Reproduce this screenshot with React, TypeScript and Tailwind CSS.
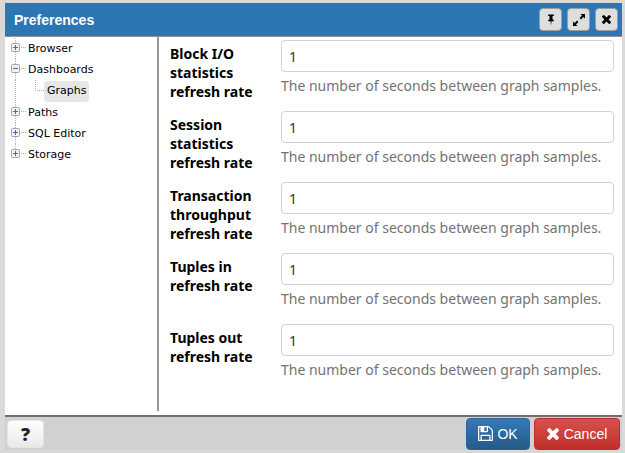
import type { ReactNode } from "react";

const FIELDS = [
  { id: "block-io", label: "Block I/O statistics refresh rate" },
  { id: "session", label: "Session statistics refresh rate" },
  { id: "transaction", label: "Transaction throughput refresh rate" },
  { id: "tuples-in", label: "Tuples in refresh rate" },
  { id: "tuples-out", label: "Tuples out refresh rate" },
];

function TimesIcon({ className }: { className: string }) {
  return (
    <svg viewBox="300 364 1192 1192" className={className} fill="currentColor" aria-hidden="true">
      <path d="M1490 1322q0 40-28 68l-136 136q-28 28-68 28t-68-28l-294-294-294 294q-28 28-68 28t-68-28l-136-136q-28-28-28-68t28-68l294-294-294-294q-28-28-28-68t28-68l136-136q28-28 68-28t68 28l294 294 294-294q28-28 68-28t68 28l136 136q28 28 28 68t-28 68l-294 294 294 294q28 28 28 68z" />
    </svg>
  );
}

function SaveIcon() {
  return (
    <svg viewBox="0 128 1536 1536" className="size-[15px]" fill="currentColor" aria-hidden="true">
      <path d="M384 1536h768v-384h-768v384zm896 0h128v-896q0-14-10-38.5t-20-34.5l-281-281q-10-10-34-20t-39-10v416q0 40-28 68t-68 28h-576q-40 0-68-28t-28-68v-416h-128v1280h128v-416q0-40 28-68t68-28h832q40 0 68 28t28 68v416zm-384-928v-320q0-13-9.5-22.5t-22.5-9.5h-192q-13 0-22.5 9.5t-9.5 22.5v320q0 13 9.5 22.5t22.5 9.5h192q13 0 22.5-9.5t9.5-22.5zm640 32v928q0 40-28 68t-68 28h-1344q-40 0-68-28t-28-68v-1344q0-40 28-68t68-28h928q40 0 88 20t76 48l280 280q28 28 48 76t20 88z" />
    </svg>
  );
}

function PinIcon() {
  return (
    <svg viewBox="0 0 12 12" className="size-3" fill="currentColor" aria-hidden="true">
      <path d="M3.200 0.500h5.600v1.500H7.500v3.300q1.500.6 1.500 2H6.500L6 11.800 5.500 7.300H3q0-1.400 1.500-2V2H3.200z" />
    </svg>
  );
}

function MaximizeIcon() {
  return (
    <svg viewBox="0 0 12 12" className="size-3" fill="currentColor" aria-hidden="true">
      <path d="M7.500 0H12v4.500L10.400 3 8 5.400 6.600 4 9 1.600zM4.500 12H0V7.500L1.600 9 4 6.600 5.400 8 3 10.400z" />
    </svg>
  );
}

function TitleButton({ label, children }: { label: string; children: ReactNode }) {
  return (
    <button
      type="button"
      aria-label={label}
      className="flex size-[23px] items-center justify-center rounded border border-[#a09c98] bg-[#dedede] text-black"
    >
      {children}
    </button>
  );
}

function Toggle({ open, last }: { open: boolean; last: boolean }) {
  return (
    <svg viewBox="0 0 16 21" className="h-[21px] w-4 shrink-0" fill="none" aria-hidden="true">
      <path d={last ? "M5.500 0v10M11 9.500h5" : "M5.500 0v21M11 9.500h5"} stroke="#b0b0b0" strokeDasharray="1 1" />
      <rect x="1.500" y="5.500" width="8" height="8" rx="1" fill="#f1f1f1" stroke="#a5a5a5" />
      <path d={open ? "M3 9.500h5" : "M3 9.500h5M5.500 7v5"} stroke="#4a66b5" />
    </svg>
  );
}

type TreeItemProps = { label: string; open?: boolean; last?: boolean; children?: ReactNode };

function TreeItem({ label, open = false, last = false, children }: TreeItemProps) {
  return (
    <li>
      <button type="button" aria-expanded={open} className="flex h-[21px] items-center">
        <Toggle open={open} last={last} />
        <span className="ml-[2px] pt-[2px]">{label}</span>
      </button>
      {children}
    </li>
  );
}

export default function App() {
  return (
    <div className="flex min-h-screen flex-col border-t-[3px] border-r-[3px] border-b-[3px] border-l-[5px] border-[#d9d9d9] bg-white font-['Noto_Sans',sans-serif] text-black">
      <header className="flex h-[34px] items-center justify-between border-b border-[#8e9499] bg-[#2c76b4] pr-1 pl-[9px]">
        <h1 className="font-['Liberation_Sans',Arial,sans-serif] text-sm font-bold text-white">Preferences</h1>
        <div className="flex gap-[5px]">
          <TitleButton label="Pin">
            <PinIcon />
          </TitleButton>
          <TitleButton label="Maximize">
            <MaximizeIcon />
          </TitleButton>
          <TitleButton label="Close">
            <TimesIcon className="size-[9px]" />
          </TitleButton>
        </div>
      </header>

      <main className="flex grow pb-1">
        <nav className="w-[154px] shrink-0 border-r-2 border-[#999] pt-px pl-[5px] font-['DejaVu_Sans',Verdana,sans-serif] text-[11px]">
          <ul>
            <TreeItem label="Browser" />
            <TreeItem label="Dashboards" open>
              <ul>
                <li className="flex h-[22px] items-center">
                  <svg viewBox="0 0 34 22" className="h-[22px] w-[34px]" fill="none" aria-hidden="true">
                    <path d="M5.500 0v22M25.500 0v10.500h9" stroke="#b0b0b0" strokeDasharray="1 1" />
                  </svg>
                  <button type="button" className="h-[21px] rounded-sm bg-[#e6e6e6] px-[3px]">
                    Graphs
                  </button>
                </li>
              </ul>
            </TreeItem>
            <TreeItem label="Paths" />
            <TreeItem label="SQL Editor" />
            <TreeItem label="Storage" last />
          </ul>
        </nav>

        <form id="preferences" className="grow pt-[3px] pr-2 pl-[11px]">
          {FIELDS.map((field) => (
            <div key={field.id} className="flex h-[71px]">
              <label htmlFor={field.id} className="w-[111px] shrink-0 pt-1 pr-4 text-sm leading-[19px] font-bold">
                {field.label}
              </label>
              <div className="grow">
                <input
                  id={field.id}
                  type="text"
                  defaultValue="1"
                  aria-describedby={`${field.id}-help`}
                  className="h-8 w-full rounded border border-[#d2d2d2] px-[7px] text-sm text-[#333]"
                />
                <p id={`${field.id}-help`} className="pt-1 text-sm leading-[20px] text-[#737373]">
                  The number of seconds between graph samples.
                </p>
              </div>
            </div>
          ))}
        </form>
      </main>

      <footer className="flex h-[35px] items-center justify-between border-t-2 border-[#707070] bg-[#d1d1d1] pr-[2px] pl-[2px] font-['Liberation_Sans',Arial,sans-serif] text-sm">
        <button
          type="button"
          aria-label="Help"
          className="h-[28px] w-[37px] rounded border border-[#e4e4e4] bg-linear-to-b from-white to-[#e8e8e8] font-['Open_Sans',sans-serif] text-lg leading-[24px] font-extrabold text-[#222]"
        >
          ?
        </button>
        <div className="flex gap-1">
          <button
            type="submit"
            form="preferences"
            className="flex h-8 w-16 items-center justify-center gap-1 rounded border border-[#2b669a] bg-linear-to-b from-[#337ab7] to-[#265a88] text-white"
          >
            <SaveIcon />
            <span className="pt-px">OK</span>
          </button>
          <button
            type="button"
            className="flex h-8 w-[86px] items-center justify-center gap-[5px] rounded border border-[#b92c28] bg-linear-to-b from-[#d9504c] to-[#c12e2a] text-white"
          >
            <TimesIcon className="size-3" />
            <span className="pt-px">Cancel</span>
          </button>
        </div>
      </footer>
    </div>
  );
}
